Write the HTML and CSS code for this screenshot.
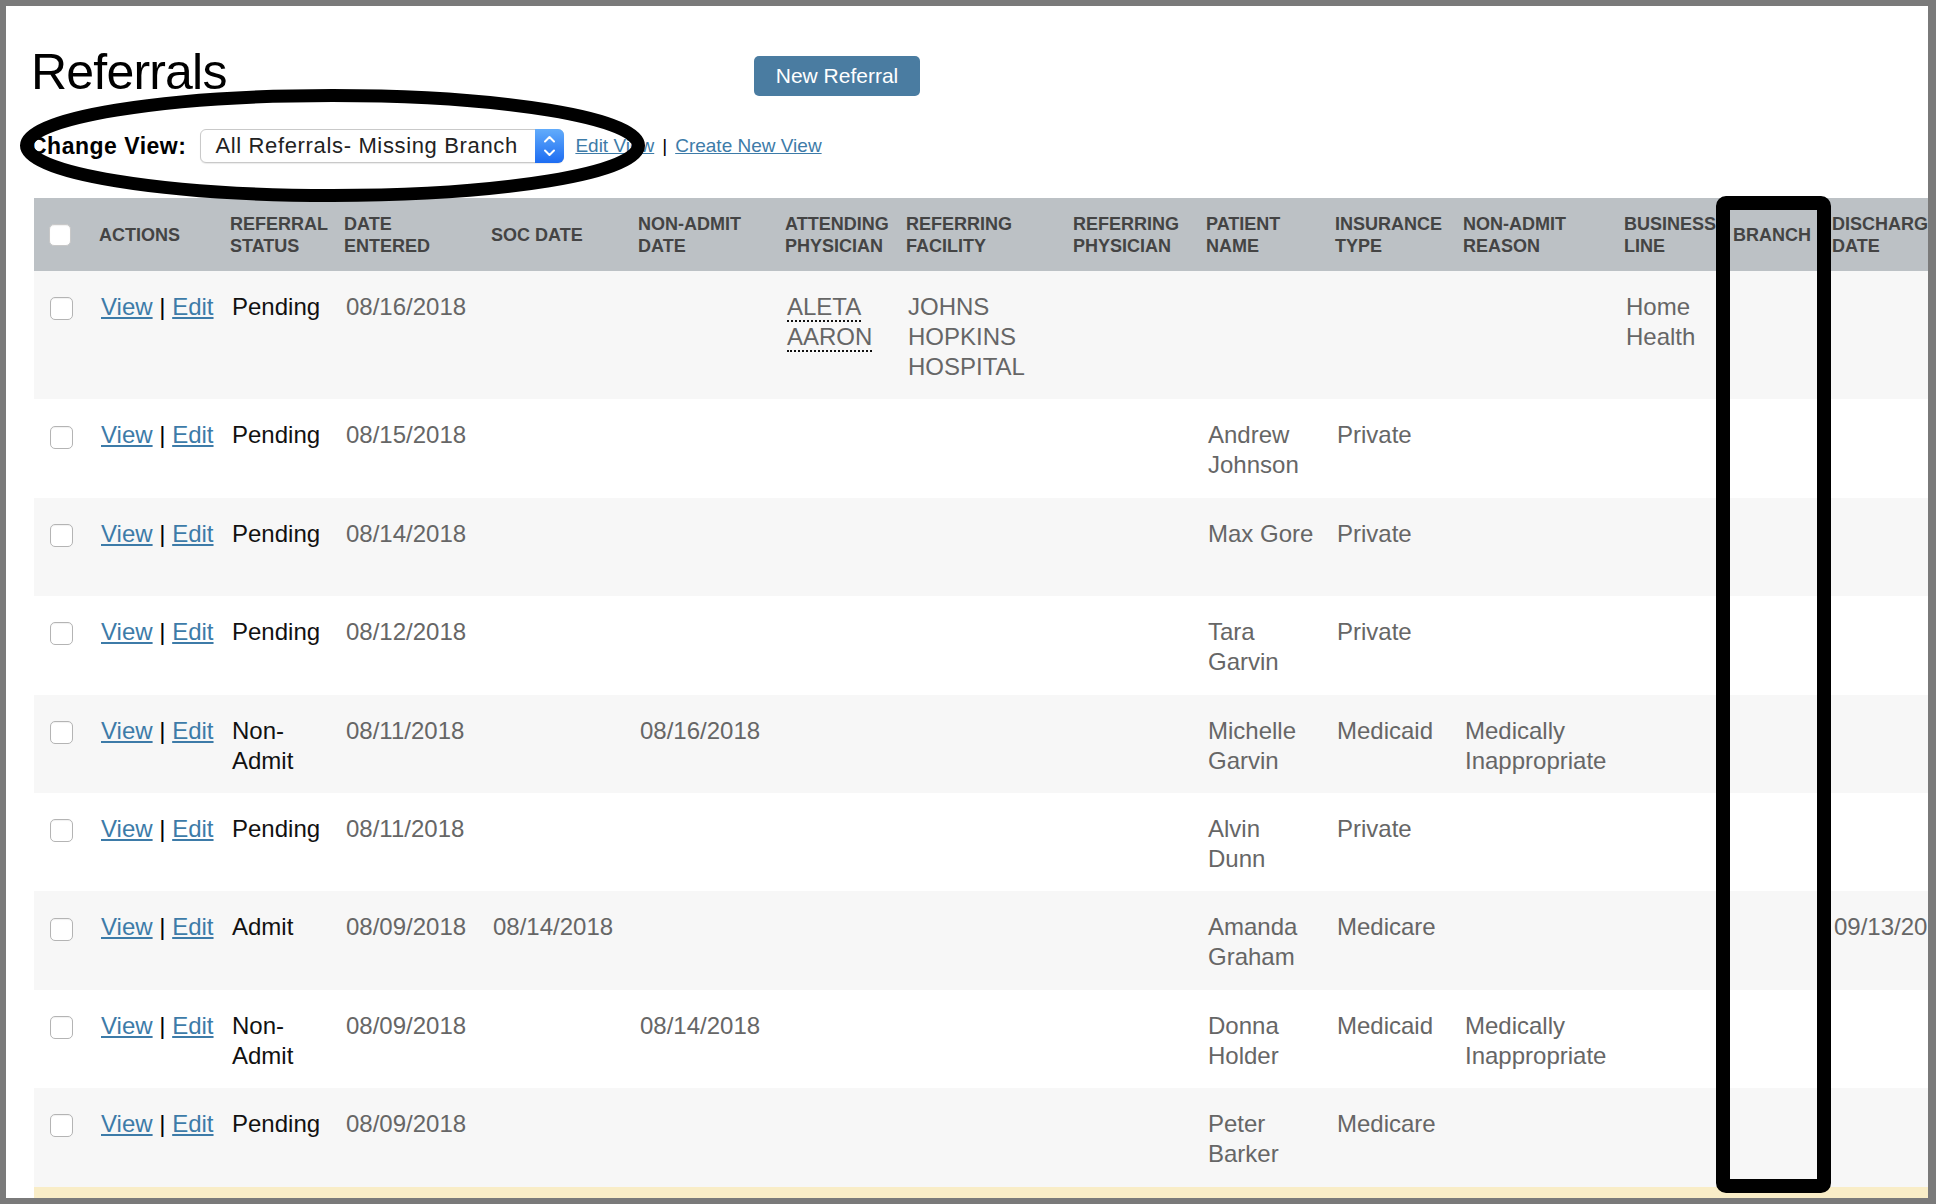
FILE: index.html
```html
<!DOCTYPE html>
<html lang="en">
<head>
    <meta charset="UTF-8">
    <meta name="viewport" content="width=device-width, initial-scale=1.0">
    <title>Referrals</title>
    <link rel="stylesheet" href="styles.css">
</head>
<body>
    <div class="window">
        <div class="top-bar">
            <h1 class="page-title">Referrals</h1>
            <a class="btn-primary" href="#">New Referral</a>
        </div>

        <div class="view-bar">
            <span class="view-label">Change View:</span>
            <div class="view-select">
                <span class="view-select-text">All Referrals- Missing Branch</span>
                <span class="view-select-stepper">
                    <svg width="29" height="34" viewBox="0 0 29 34">
                        <polyline points="10,12.5 14.5,8 19,12.5" fill="none" stroke="#fff" stroke-width="2" stroke-linecap="round" stroke-linejoin="round"/>
                        <polyline points="10,21.5 14.5,26 19,21.5" fill="none" stroke="#fff" stroke-width="2" stroke-linecap="round" stroke-linejoin="round"/>
                    </svg>
                </span>
            </div>
            <div class="view-links">
                <a href="#">Edit View</a><span class="sep">|</span><a href="#">Create New View</a>
            </div>
        </div>

        <table class="referrals">
            <colgroup>
                <col style="width: 57px">
                <col style="width: 131px">
                <col style="width: 114px">
                <col style="width: 147px">
                <col style="width: 147px">
                <col style="width: 147px">
                <col style="width: 121px">
                <col style="width: 167px">
                <col style="width: 133px">
                <col style="width: 129px">
                <col style="width: 128px">
                <col style="width: 161px">
                <col style="width: 109px">
                <col style="width: 99px">
                <col style="width: 170px">
            </colgroup>
            <thead>
                <tr>
                    <th><input type="checkbox" class="check"></th>
                    <th>Actions</th>
                    <th>Referral Status</th>
                    <th>Date Entered</th>
                    <th>SOC Date</th>
                    <th>Non-Admit Date</th>
                    <th>Attending Physician</th>
                    <th>Referring Facility</th>
                    <th>Referring Physician</th>
                    <th>Patient Name</th>
                    <th>Insurance Type</th>
                    <th>Non-Admit Reason</th>
                    <th>Business Line</th>
                    <th>Branch</th>
                    <th>Discharge Date</th>
                </tr>
            </thead>
            <tbody>
                <tr>
                    <td><input type="checkbox" class="check"></td>
                    <td class="actions"><a href="#">View</a> <span class="sep">|</span> <a href="#">Edit</a></td>
                    <td class="status">Pending</td>
                    <td>08/16/2018</td>
                    <td></td>
                    <td></td>
                    <td><abbr title="Attending physician">ALETA AARON</abbr></td>
                    <td>JOHNS HOPKINS HOSPITAL</td>
                    <td></td>
                    <td></td>
                    <td></td>
                    <td></td>
                    <td>Home Health</td>
                    <td></td>
                    <td></td>
                </tr>
                <tr>
                    <td><input type="checkbox" class="check"></td>
                    <td class="actions"><a href="#">View</a> <span class="sep">|</span> <a href="#">Edit</a></td>
                    <td class="status">Pending</td>
                    <td>08/15/2018</td>
                    <td></td>
                    <td></td>
                    <td></td>
                    <td></td>
                    <td></td>
                    <td>Andrew Johnson</td>
                    <td>Private</td>
                    <td></td>
                    <td></td>
                    <td></td>
                    <td></td>
                </tr>
                <tr>
                    <td><input type="checkbox" class="check"></td>
                    <td class="actions"><a href="#">View</a> <span class="sep">|</span> <a href="#">Edit</a></td>
                    <td class="status">Pending</td>
                    <td>08/14/2018</td>
                    <td></td>
                    <td></td>
                    <td></td>
                    <td></td>
                    <td></td>
                    <td>Max Gore</td>
                    <td>Private</td>
                    <td></td>
                    <td></td>
                    <td></td>
                    <td></td>
                </tr>
                <tr>
                    <td><input type="checkbox" class="check"></td>
                    <td class="actions"><a href="#">View</a> <span class="sep">|</span> <a href="#">Edit</a></td>
                    <td class="status">Pending</td>
                    <td>08/12/2018</td>
                    <td></td>
                    <td></td>
                    <td></td>
                    <td></td>
                    <td></td>
                    <td>Tara Garvin</td>
                    <td>Private</td>
                    <td></td>
                    <td></td>
                    <td></td>
                    <td></td>
                </tr>
                <tr>
                    <td><input type="checkbox" class="check"></td>
                    <td class="actions"><a href="#">View</a> <span class="sep">|</span> <a href="#">Edit</a></td>
                    <td class="status">Non-Admit</td>
                    <td>08/11/2018</td>
                    <td></td>
                    <td>08/16/2018</td>
                    <td></td>
                    <td></td>
                    <td></td>
                    <td>Michelle Garvin</td>
                    <td>Medicaid</td>
                    <td>Medically Inappropriate</td>
                    <td></td>
                    <td></td>
                    <td></td>
                </tr>
                <tr>
                    <td><input type="checkbox" class="check"></td>
                    <td class="actions"><a href="#">View</a> <span class="sep">|</span> <a href="#">Edit</a></td>
                    <td class="status">Pending</td>
                    <td>08/11/2018</td>
                    <td></td>
                    <td></td>
                    <td></td>
                    <td></td>
                    <td></td>
                    <td>Alvin Dunn</td>
                    <td>Private</td>
                    <td></td>
                    <td></td>
                    <td></td>
                    <td></td>
                </tr>
                <tr>
                    <td><input type="checkbox" class="check"></td>
                    <td class="actions"><a href="#">View</a> <span class="sep">|</span> <a href="#">Edit</a></td>
                    <td class="status">Admit</td>
                    <td>08/09/2018</td>
                    <td>08/14/2018</td>
                    <td></td>
                    <td></td>
                    <td></td>
                    <td></td>
                    <td>Amanda Graham</td>
                    <td>Medicare</td>
                    <td></td>
                    <td></td>
                    <td></td>
                    <td>09/13/2018</td>
                </tr>
                <tr>
                    <td><input type="checkbox" class="check"></td>
                    <td class="actions"><a href="#">View</a> <span class="sep">|</span> <a href="#">Edit</a></td>
                    <td class="status">Non-Admit</td>
                    <td>08/09/2018</td>
                    <td></td>
                    <td>08/14/2018</td>
                    <td></td>
                    <td></td>
                    <td></td>
                    <td>Donna Holder</td>
                    <td>Medicaid</td>
                    <td>Medically Inappropriate</td>
                    <td></td>
                    <td></td>
                    <td></td>
                </tr>
                <tr>
                    <td><input type="checkbox" class="check"></td>
                    <td class="actions"><a href="#">View</a> <span class="sep">|</span> <a href="#">Edit</a></td>
                    <td class="status">Pending</td>
                    <td>08/09/2018</td>
                    <td></td>
                    <td></td>
                    <td></td>
                    <td></td>
                    <td></td>
                    <td>Peter Barker</td>
                    <td>Medicare</td>
                    <td></td>
                    <td></td>
                    <td></td>
                    <td></td>
                </tr>
                <tr class="flagged">
                    <td><input type="checkbox" class="check"></td>
                    <td class="actions"><a href="#">View</a> <span class="sep">|</span> <a href="#">Edit</a></td>
                    <td class="status">Pending</td>
                    <td>08/08/2018</td>
                    <td></td>
                    <td></td>
                    <td></td>
                    <td></td>
                    <td></td>
                    <td></td>
                    <td></td>
                    <td></td>
                    <td></td>
                    <td></td>
                    <td></td>
                </tr>
            </tbody>
        </table>

        <!-- review marks drawn over the screenshot -->
        <svg class="mark-ellipse" width="625" height="113" viewBox="0 0 625 113">
            <ellipse cx="312.5" cy="56.5" rx="306" ry="50" fill="none" stroke="#000" stroke-width="13"/>
        </svg>
        <div class="mark-box"></div>
    </div>
</body>
</html>
```

FILE: styles.css
```css
html, body {
    margin: 0;
    padding: 0;
    height: 100%;
}

body {
    background-color: #7a7a7a;
    overflow: hidden;
    font-family: 'Liberation Sans', Arial, Helvetica, sans-serif;
}

.window {
    position: relative;
    margin: 6px 8px 6px 6px;
    height: 1192px;
    background-color: #fff;
    overflow: hidden;
}

/* title row */
.top-bar {
    display: flex;
    align-items: flex-start;
    padding: 41px 0 0 25px;
}

.page-title {
    width: 723px;
    margin: 0;
    font-size: 50px;
    line-height: 50px;
    font-weight: 400;
    letter-spacing: -0.8px;
    color: #000;
}

.btn-primary {
    display: block;
    margin-top: 9px;
    width: 166px;
    height: 40px;
    line-height: 40px;
    text-align: center;
    background-color: #4a7ca1;
    color: #fff;
    font-size: 21px;
    text-decoration: none;
    border-radius: 5px;
}

/* view picker */
.view-bar {
    display: flex;
    align-items: center;
    margin-top: 32px;
    padding-left: 24px;
    height: 34px;
}

.view-label {
    font-weight: 700;
    font-size: 23px;
    letter-spacing: 0.5px;
    color: #000;
    margin-right: 14px;
}

.view-select {
    display: flex;
    width: 364px;
    height: 34px;
    box-sizing: border-box;
    border: 1px solid #c9c9c9;
    border-radius: 6px;
    background-color: #fff;
    box-shadow: 0 1px 1px rgba(0, 0, 0, 0.08);
}

.view-select-text {
    flex-grow: 1;
    padding-left: 14px;
    line-height: 32px;
    font-size: 22px;
    letter-spacing: 0.65px;
    color: #222;
    white-space: nowrap;
}

.view-select-stepper {
    width: 29px;
    margin: -1px -1px -1px 0;
    border-radius: 0 6px 6px 0;
    background: linear-gradient(#62acfb, #1d6cf2);
}

.view-select-stepper svg {
    display: block;
}

.view-links {
    margin-left: 11px;
    font-size: 19px;
}

.view-links a {
    color: #3d7ba8;
}

.view-links .sep {
    margin: 0 8px;
    color: #000;
}

/* table */
.referrals {
    margin: 35px 0 0 28px;
    width: 1960px;
    table-layout: fixed;
    border-collapse: collapse;
    border-spacing: 0;
}

.referrals th {
    height: 73px;
    padding: 0 8px;
    background-color: #bcc1c5;
    color: #444;
    font-size: 18px;
    line-height: 22px;
    font-weight: 700;
    text-transform: uppercase;
    text-align: left;
    vertical-align: middle;
}

.referrals tbody tr {
    height: 98.4px;
}

.referrals tbody tr:nth-child(odd) {
    background-color: #f7f7f7;
}

.referrals tbody tr.flagged {
    background-color: #f9edc7;
}

.referrals td {
    padding: 21px 6px 17.4px 10px;
    font-size: 24px;
    line-height: 30px;
    color: #666;
    vertical-align: top;
    white-space: normal;
}

.referrals td.status {
    color: #111;
}

.referrals td.actions {
    white-space: nowrap;
    color: #000;
}

.referrals td.actions a {
    color: #3d7ba8;
}

.referrals abbr {
    text-decoration: none;
    border-bottom: 2px dotted #111;
}

.check {
    -webkit-appearance: none;
    appearance: none;
    margin: 0 0 0 6px;
    width: 23px;
    height: 23px;
    box-sizing: border-box;
    border: 1px solid #b4b4b4;
    border-radius: 5px;
    background-color: #fff;
    box-shadow: inset 0 1px 1px rgba(0, 0, 0, 0.06);
    vertical-align: middle;
}

.referrals th .check {
    margin-left: 7px;
    width: 22px;
    height: 22px;
    border-color: #c8c8c8;
    display: block;
}

/* annotation marks */
.mark-ellipse {
    position: absolute;
    left: 14px;
    top: 83px;
}

.mark-box {
    position: absolute;
    left: 1710px;
    top: 190px;
    width: 115px;
    height: 997px;
    box-sizing: border-box;
    border: 14px solid #000;
    border-radius: 10px;
}
```
